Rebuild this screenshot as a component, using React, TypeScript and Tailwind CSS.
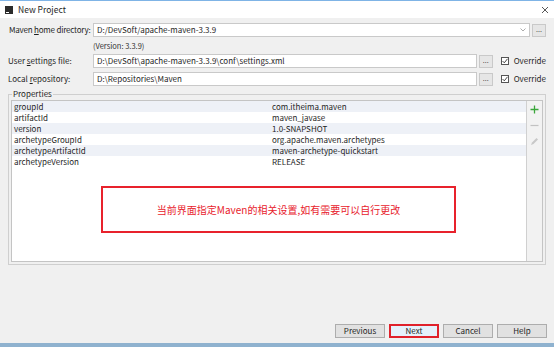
import React from 'react'

const font = { fontFamily: '"Noto Sans CJK SC", "Noto Sans", sans-serif' }

const props = [
  ['groupId', 'com.itheima.maven'],
  ['artifactId', 'maven_javase'],
  ['version', '1.0-SNAPSHOT'],
  ['archetypeGroupId', 'org.apache.maven.archetypes'],
  ['archetypeArtifactId', 'maven-archetype-quickstart'],
  ['archetypeVersion', 'RELEASE'],
]

function Dots() {
  return (
    <div className="w-[14px] h-[13px] border border-[#c9c9c9] bg-[#e6e6e6] flex items-end justify-center pb-[3px] text-[7px] leading-none text-[#444]">
      ...
    </div>
  )
}

function Override() {
  return (
    <div className="flex items-center gap-[5px] ml-[8px] whitespace-nowrap">
      <div className="w-[8px] h-[8px] border border-[#555] bg-white flex items-center justify-center">
        <svg width="6" height="6" viewBox="0 0 6 6">
          <path d="M0.5 3 L2.3 4.8 L5.5 0.8" stroke="#333" strokeWidth="0.9" fill="none" />
        </svg>
      </div>
      <span>Override</span>
    </div>
  )
}

function Btn({ label, active }: { label: string; active?: boolean }) {
  return (
    <div
      className={`w-[50px] h-[14px] flex items-center justify-center text-[8px] ${
        active ? 'border-2 border-[#e0212b] bg-[#e5f1fb]' : 'border border-[#adadad] bg-[#e1e1e1]'
      }`}
    >
      {label}
    </div>
  )
}

export default function App() {
  return (
    <div className="w-[554px] h-[347px] bg-[#f0f0f0] flex flex-col text-[8px] text-[#1e1e1e] overflow-hidden" style={font}>
      {/* title bar */}
      <div className="h-[18px] bg-white border-t border-[#7fb4e6] flex items-center pl-[5px] pr-[5px]">
        <div className="w-[8px] h-[8px] bg-[#2b2b2b] flex items-end justify-start p-[1px]">
          <div className="w-[3px] h-[1px] bg-white" />
        </div>
        <span className="ml-[5px] text-[8.5px]">New Project</span>
        <div className="flex-1" />
        <svg width="8" height="8" viewBox="0 0 8 8">
          <path d="M1 1 L7 7 M7 1 L1 7" stroke="#444" strokeWidth="0.9" />
        </svg>
      </div>

      <div className="flex flex-col pl-[8px] pr-[8px] pt-[5px]">
        {/* maven home */}
        <div className="flex items-center h-[14px]">
          <span className="w-[85px] shrink-0 whitespace-nowrap pl-[1px] tracking-[-0.2px]">Maven <u>h</u>ome directory:</span>
          <div className="flex-1 h-[14px] bg-white border border-[#c9c9c9] flex items-center pl-[3px] pr-[3px]">
            <span className="flex-1">D:/DevSoft/apache-maven-3.3.9</span>
            <svg width="6" height="4" viewBox="0 0 6 4">
              <path d="M0.5 0.5 L3 3 L5.5 0.5" stroke="#888" strokeWidth="0.7" fill="none" />
            </svg>
          </div>
          <div className="ml-[2px]">
            <Dots />
          </div>
        </div>
        <div className="h-[17px] flex items-center pl-[85px] text-[7.5px] text-[#333]">(Version: 3.3.9)</div>

        {/* settings */}
        <div className="flex items-center h-[14px]">
          <span className="w-[85px] shrink-0 whitespace-nowrap">User <u>s</u>ettings file:</span>
          <div className="w-[386px] h-[14px] bg-white border border-[#c9c9c9] flex items-center pl-[3px] whitespace-nowrap">
            D:\DevSoft\apache-maven-3.3.9\conf\settings.xml
          </div>
          <div className="ml-[2px]">
            <Dots />
          </div>
          <Override />
        </div>

        {/* local repo */}
        <div className="flex items-center h-[14px] mt-[4px]">
          <span className="w-[85px] shrink-0 whitespace-nowrap">Local <u>r</u>epository:</span>
          <div className="w-[386px] h-[14px] bg-white border border-[#c9c9c9] flex items-center pl-[3px]">
            D:\Repositories\Maven
          </div>
          <div className="ml-[2px]">
            <Dots />
          </div>
          <Override />
        </div>

        {/* properties group */}
        <div className="relative mt-[8px] h-[171px] border border-[#cfcfcf] p-[2px] pt-[5px]">
          <span className="absolute left-[3px] top-[-6px] bg-[#f0f0f0] px-[1px] leading-[10px]">Properties</span>
          <div className="h-full border border-[#c4c4c4] flex">
            <div className="flex-1 bg-white relative">
              {props.map(([k, v], i) => (
                <div key={k} className={`h-[11px] flex items-center ${i % 2 === 0 ? 'bg-[#eef1f7]' : 'bg-white'}`}>
                  <span className="w-[260px] pl-[2px]">{k}</span>
                  <span>{v}</span>
                </div>
              ))}
              <div className="absolute left-[89px] top-[85px] w-[355px] h-[47px] border-2 border-[#e8222c] flex items-center justify-center text-[10px] text-[#e8222c]">
                当前界面指定Maven的相关设置,如有需要可以自行更改
              </div>
            </div>
            <div className="w-[16px] border-l border-[#d0d0d0] bg-[#f2f2f2] flex flex-col items-center pt-[4px] gap-[7px]">
              <svg width="9" height="9" viewBox="0 0 9 9">
                <path d="M4.5 0.5 V8.5 M0.5 4.5 H8.5" stroke="#3aa63a" strokeWidth="1.3" />
              </svg>
              <svg width="9" height="9" viewBox="0 0 9 9">
                <path d="M0.5 4.5 H8.5" stroke="#c2c2c2" strokeWidth="1.2" />
              </svg>
              <svg width="9" height="9" viewBox="0 0 9 9">
                <path d="M1 8 L2 5.5 L6.5 1 L8 2.5 L3.5 7 Z" fill="#c8c8c8" />
              </svg>
            </div>
          </div>
        </div>
      </div>

      <div className="flex-1" />
      <div className="flex justify-end gap-[4px] pr-[7px]">
        <Btn label="Previous" />
        <Btn label="Next" active />
        <Btn label="Cancel" />
        <Btn label="Help" />
      </div>
      <div className="h-[5px]" />
      <div className="h-[4px] bg-[#8fb2cf]" />
    </div>
  )
}
